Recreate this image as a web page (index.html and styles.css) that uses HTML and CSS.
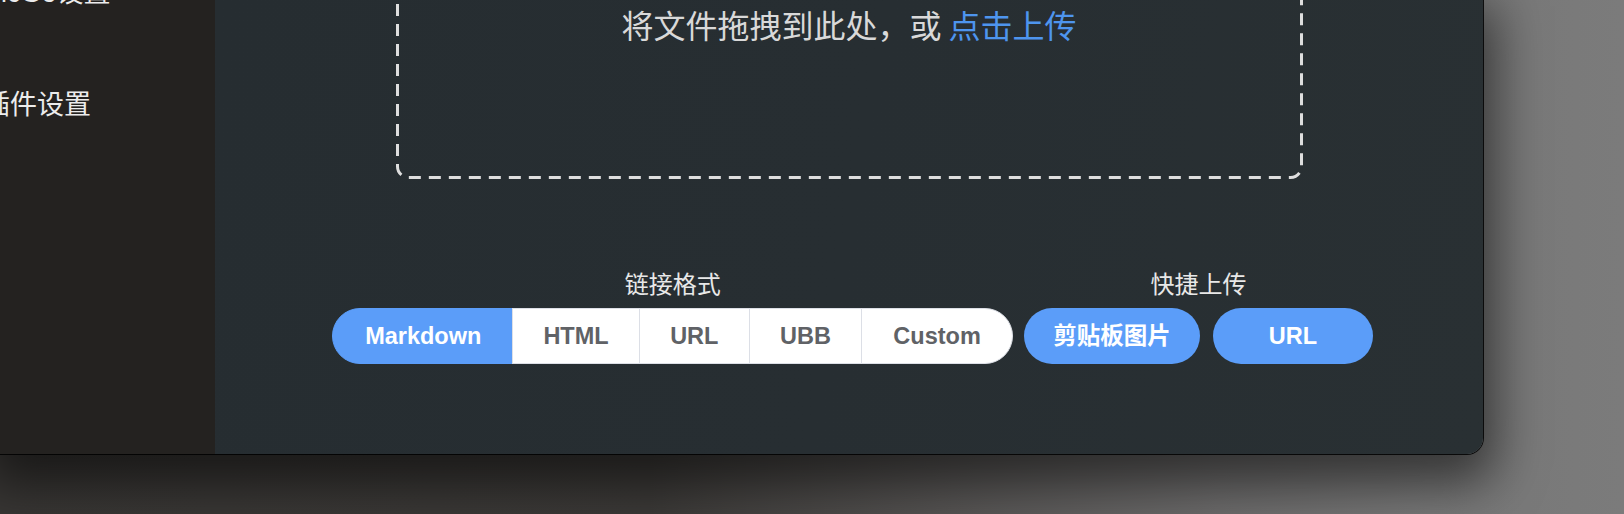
FILE: index.html
```html
<!DOCTYPE html>
<html lang="zh-CN">
<head>
<meta charset="utf-8">
<title>PicGo 上传区</title>
<link rel="stylesheet" href="styles.css">
</head>
<body>
<div class="desktop">
  <div class="window">
    <aside class="sidebar">
      <ul class="menu">
        <li class="menu-item">PicGo设置</li>
        <li class="menu-item">插件设置</li>
      </ul>
    </aside>
    <main class="main">
      <div class="dropzone">
        <svg class="dash" width="907" height="239" viewBox="0 0 907 239" aria-hidden="true">
          <rect x="1.5" y="1.5" width="904" height="236" rx="11" ry="11" fill="none" stroke="#dedede" stroke-width="3" stroke-dasharray="12 8"/>
        </svg>
        <div class="drop-text">将文件拖拽到此处，或 <em>点击上传</em></div>
      </div>
      <div class="toolbar">
        <div class="group">
          <div class="group-label">链接格式</div>
          <div class="seg">
            <div class="seg-item active first">Markdown</div>
            <div class="seg-item seg-html">HTML</div>
            <div class="seg-item seg-url">URL</div>
            <div class="seg-item seg-ubb">UBB</div>
            <div class="seg-item last">Custom</div>
          </div>
        </div>
        <div class="group">
          <div class="group-label">快捷上传</div>
          <div class="btns">
            <div class="btn">剪贴板图片</div>
            <div class="btn btn-url">URL</div>
          </div>
        </div>
      </div>
    </main>
  </div>
</div>
</body>
</html>
```
FILE: styles.css
```css
html, body {
  margin: 0;
  padding: 0;
}
body {
  font-family: "Liberation Sans", "Noto Sans CJK SC", sans-serif;
  background: #3a3836;
}
.desktop {
  width: 1624px;
  height: 514px;
  overflow: hidden;
  background: linear-gradient(90deg, #383634 0%, #3b3937 40%, #555352 58%, #6c6b6b 75%, #777777 88%, #7b7b7b 100%);
}
.window {
  display: flex;
  width: 1483px;
  height: 454px;
  border-bottom-right-radius: 16px;
  overflow: hidden;
  box-shadow: 0 0 0 1px rgba(0,0,0,0.85), 0 18px 50px 12px rgba(0,0,0,0.55);
}
.sidebar {
  width: 215px;
  flex: none;
  background: #242220;
  overflow: hidden;
}
.menu {
  list-style: none;
  margin: -63px 0 0 -17px;
  padding: 0;
}
.menu-item {
  height: 112px;
  line-height: 112px;
  font-size: 27px;
  color: #ececec;
  white-space: nowrap;
}
.main {
  flex: 1;
  display: flex;
  flex-direction: column;
  align-items: center;
  background: linear-gradient(100deg, #262d31 0%, #272e32 50%, #293033 100%);
}
.dropzone {
  position: relative;
  width: 907px;
  height: 239px;
  margin-top: -60px;
  box-sizing: border-box;
  padding-top: 64px;
  display: flex;
  flex-direction: column;
  align-items: center;
}
.dash {
  position: absolute;
  left: 0;
  top: 0;
}
.drop-text {
  font-family: "Noto Sans CJK SC", sans-serif;
  font-size: 32px;
  line-height: 40px;
  color: #d9d9d9;
  white-space: nowrap;
}
.drop-text em {
  font-style: normal;
  color: #4e95ee;
}
.toolbar {
  display: flex;
  gap: 11px;
  margin-top: 89px;
  padding-left: 7px;
}
.group {
  display: flex;
  flex-direction: column;
  align-items: center;
  gap: 10px;
}
.group-label {
  font-family: "Noto Sans CJK SC", sans-serif;
  font-size: 24px;
  line-height: 30px;
  color: #e8e8e8;
}
.seg {
  display: flex;
  height: 56px;
}
.seg-item {
  box-sizing: border-box;
  height: 56px;
  line-height: 54px;
  padding: 0 30px;
  font-size: 23.5px;
  font-weight: bold;
  color: #606266;
  background: #ffffff;
  border: 1px solid #dcdfe6;
  margin-left: -1px;
  white-space: nowrap;
}
.seg-item.seg-url {
  padding: 0 30.5px;
}
.seg-item.first {
  margin-left: 0;
  padding-left: 32px;
  padding-right: 31px;
  border-radius: 28px 0 0 28px;
}
.seg-item.last {
  padding: 0 31.5px;
  border-radius: 0 28px 28px 0;
}
.seg-item.active {
  background: #5b9df9;
  border-color: #5b9df9;
  color: #ffffff;
}
.btns {
  display: flex;
  gap: 13px;
}
.btn {
  box-sizing: border-box;
  height: 56px;
  line-height: 56px;
  padding: 0 29px;
  border-radius: 28px;
  background: #5b9df9;
  color: #ffffff;
  font-size: 23.5px;
  font-weight: bold;
  text-align: center;
  white-space: nowrap;
}
.btn-url {
  width: 160px;
  padding: 0;
}
```
